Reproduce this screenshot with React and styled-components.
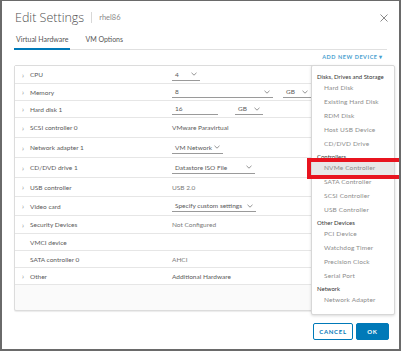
import React from 'react';
import styled, { createGlobalStyle } from 'styled-components';

const Global = createGlobalStyle`
  html, body { margin: 0; padding: 0; background: #fff; }
  body { font-family: Lato, "Noto Sans", sans-serif; }
`

const Frame = styled.div`
  position: relative;
  box-sizing: border-box;
  width: 401px;
  height: 351px;
  border: 2px solid #6a6a6a;
  border-top-width: 1px;
  background: #fff;
  display: flex;
  flex-direction: column;
  overflow: hidden;
`
const Header = styled.div`
  display: flex;
  align-items: center;
  height: 27px;
  padding: 3px 11px 0 13px;
`
const Title = styled.h1`
  margin: 0;
  font-family: "Open Sans", Lato, sans-serif;
  font-size: 12.5px;
  font-weight: 300;
  color: #4f4f4f;
`
const Pipe = styled.span`
  width: 1px;
  height: 11px;
  background: #d8d8d8;
  margin: 0 7px 0 7px;
`
const VmName = styled.span`
  font-size: 7.5px;
  color: #8a8a8a;
`
const Close = styled.svg`
  margin-left: auto;
  width: 8px;
  height: 8px;
  stroke: #8a8a8a;
  stroke-width: 1;
`
const Tabs = styled.div`
  display: flex;
  gap: 13px;
  margin: 4px 12px 0 12px;
  border-bottom: 1px solid #e0e0e0;
`
const Tab = styled.div`
  font-size: 7px;
  color: #565656;
  padding: 0 2px 5px;
  border-bottom: 2px solid ${p => (p.$active ? '#0079b8' : 'transparent')};
  margin-bottom: -1px;
`
const Toolbar = styled.div`
  display: flex;
  justify-content: flex-end;
  padding: 4px 16px 0 0;
  height: 11px;
`
const AddButton = styled.span`
  font-size: 5.5px;
  font-weight: 700;
  letter-spacing: 0.55px;
  color: #4a9fd0;
`
const Table = styled.div`
  margin: 0 6px 0 12px;
  border: 1px solid #dcdcdc;
  border-radius: 2px;
  background: #fafafa;
  height: 244px;
  box-shadow: 0 1px 1px rgba(0,0,0,0.08);
`
const Row = styled.div`
  display: grid;
  grid-template-columns: 8px 142px 1fr;
  align-items: center;
  height: ${p => p.$h}px;
  padding-left: 7px;
  background: #fff;
  border-bottom: 1px solid #e6e6e6;
  box-sizing: border-box;
  font-size: 6.5px;
  color: #5a5a5a;
`
const Chevron = styled.span`
  font-size: 7px;
  color: #888;
`
const Value = styled.div`
  display: flex;
  align-items: center;
  color: ${p => (p.$muted ? '#7a7a7a' : '#5a5a5a')};
`
const Select = styled.div`
  box-sizing: border-box;
  display: flex;
  align-items: center;
  justify-content: space-between;
  width: ${p => p.$w}px;
  height: 12px;
  padding: 0 3px;
  border-bottom: 1px solid #9a9a9a;
  margin-left: ${p => p.$ml || 0}px;
`
const Caret = styled.svg`
  width: 6px;
  height: 4px;
  fill: none;
  stroke: #777;
  stroke-width: 0.8;
`
const Menu = styled.div`
  position: absolute;
  left: 309px;
  top: 64px;
  width: 82px;
  padding: 5px 0 7px;
  background: #fff;
  border: 1px solid #d7d7d7;
  border-radius: 2px;
  box-shadow: 0 1px 3px rgba(0,0,0,0.15);
`
const MenuHeader = styled.div`
  font-size: 6px;
  color: #333;
  padding-left: 5px;
  height: 10px;
  line-height: 12px;
`
const MenuItem = styled.div`
  position: relative;
  font-size: 6.5px;
  color: #8c8c8c;
  letter-spacing: 0.15px;
  padding-left: 12px;
  height: 14px;
  line-height: 14px;
  background: ${p => (p.$hover ? '#e8e8e8' : 'transparent')};
`
const Mark = styled.span`
  position: absolute;
  left: -5px;
  right: -10px;
  top: -3px;
  bottom: -4px;
  border: 4px solid #e8141f;
`
const Footer = styled.div`
  display: flex;
  justify-content: flex-end;
  gap: 3px;
  padding: 12px 10px 0 0;
`
const Button = styled.div`
  box-sizing: border-box;
  height: 17px;
  width: ${p => p.$w}px;
  display: flex;
  align-items: center;
  justify-content: center;
  border-radius: 2px;
  font-size: 6px;
  font-weight: 700;
  letter-spacing: 0.7px;
  border: 1px solid #0079b8;
  color: ${p => (p.$primary ? '#fff' : '#0079b8')};
  background: ${p => (p.$primary ? '#0079b8' : '#fff')};
`

const rows = [
  { label: 'CPU', h: 18, sel: [{ t: '4', w: 28 }] },
  { label: 'Memory', h: 17, sel: [{ t: '8', w: 101 }, { t: 'GB', w: 28, ml: 10 }] },
  { label: 'Hard disk 1', h: 17, sel: [{ t: '16', w: 46, noCaret: true }, { t: 'GB', w: 28, ml: 17 }] },
  { label: 'SCSI controller 0', h: 20, text: 'VMware Paravirtual' },
  { label: 'Network adapter 1', h: 20, sel: [{ t: 'VM Network', w: 51 }] },
  { label: 'CD/DVD drive 1', h: 20, sel: [{ t: 'Datastore ISO File', w: 83 }] },
  { label: 'USB controller', h: 19, text: 'USB 2.0', muted: true },
  { label: 'Video card', h: 19, sel: [{ t: 'Specify custom settings', w: 84 }] },
  { label: 'Security Devices', h: 18, text: 'Not Configured', muted: true },
  { label: 'VMCI device', h: 17, noChevron: true },
  { label: 'SATA controller 0', h: 17, text: 'AHCI', muted: true, noChevron: true },
  { label: 'Other', h: 17, text: 'Additional Hardware' },
]

const menu = [
  { header: 'Disks, Drives and Storage', items: ['Hard Disk', 'Existing Hard Disk', 'RDM Disk', 'Host USB Device', 'CD/DVD Drive'] },
  { header: 'Controllers', items: ['NVMe Controller', 'SATA Controller', 'SCSI Controller', 'USB Controller'] },
  { header: 'Other Devices', items: ['PCI Device', 'Watchdog Timer', 'Precision Clock', 'Serial Port'] },
  { header: 'Network', items: ['Network Adapter'] },
]

const App = () => (
  <>
    <Global />
    <Frame>
      <Header>
        <Title>Edit Settings</Title>
        <Pipe />
        <VmName>rhel86</VmName>
        <Close viewBox="0 0 8 8"><path d="M0.5 0.5L7.5 7.5M7.5 0.5L0.5 7.5" /></Close>
      </Header>
      <Tabs>
        <Tab $active>Virtual Hardware</Tab>
        <Tab>VM Options</Tab>
      </Tabs>
      <Toolbar>
        <AddButton>ADD NEW DEVICE ▾</AddButton>
      </Toolbar>
      <Table>
        {rows.map(r => (
          <Row key={r.label} $h={r.h}>
            <Chevron>{r.noChevron ? '' : '›'}</Chevron>
            <span>{r.label}</span>
            <Value $muted={r.muted}>
              {r.text}
              {r.sel && r.sel.map(s => (
                <Select key={s.t} $w={s.w} $ml={s.ml}>
                  <span>{s.t}</span>
                  {!s.noCaret && (
                    <Caret viewBox="0 0 6 4"><path d="M0.5 0.8L3 3.2L5.5 0.8" /></Caret>
                  )}
                </Select>
              ))}
            </Value>
          </Row>
        ))}
      </Table>
      <Menu>
        {menu.map(g => (
          <div key={g.header}>
            <MenuHeader>{g.header}</MenuHeader>
            {g.items.map(it => (
              <MenuItem key={it} $hover={it === 'NVMe Controller'}>
                {it}
                {it === 'NVMe Controller' && <Mark />}
              </MenuItem>
            ))}
          </div>
        ))}
      </Menu>
      <Footer>
        <Button $w={40}>CANCEL</Button>
        <Button $w={33} $primary>OK</Button>
      </Footer>
    </Frame>
  </>
)

export default App;
